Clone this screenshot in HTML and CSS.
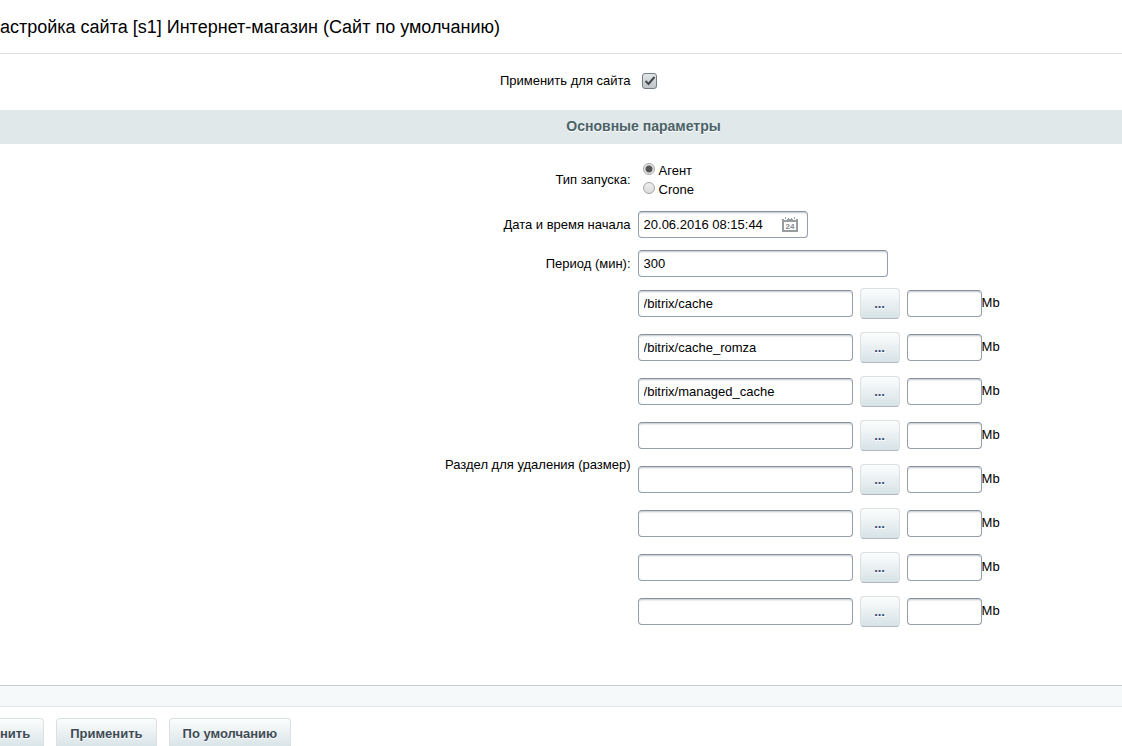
FILE: index.html
```
<!DOCTYPE html>
<html lang="ru">
<head>
<meta charset="utf-8">
<title>Настройка сайта</title>
<link rel="stylesheet" href="styles.css">
</head>
<body>
<form class="settings">
  <h1 class="title">астройка сайта [s1] Интернет-магазин (Сайт по умолчанию)</h1>
  <div class="row row-apply">
    <label class="label" for="apply">Применить для сайта</label>
    <div class="field"><input class="check" type="checkbox" id="apply" checked></div>
  </div>
  <h2 class="section">Основные параметры</h2>
  <div class="params">
    <div class="row" role="radiogroup" aria-labelledby="run-type">
      <span class="label" id="run-type">Тип запуска:</span>
      <div class="field radios">
        <label class="option"><input class="radio" type="radio" name="type" checked><span>Агент</span></label>
        <label class="option"><input class="radio" type="radio" name="type"><span>Crone</span></label>
      </div>
    </div>
    <div class="row row-date">
      <label class="label" for="start">Дата и время начала</label>
      <div class="field">
        <div class="date-box">
          <input class="date-input" type="text" id="start" value="20.06.2016 08:15:44">
          <button class="calendar" type="button" aria-label="Календарь">
            <svg width="16" height="15" viewBox="0 0 16 15" aria-hidden="true">
              <path fill="#9a9da0" fill-rule="evenodd" d="M0 2h2v1h3V2h6v1h3V2h2v13H0zM2 5v8h12V5z"/>
              <path fill="#9a9da0" d="M3 0h1v2H3zM12 0h1v2h-1zM6 1h1v1H6zM9 1h1v1H9z"/>
              <text class="calendar-day" x="8" y="12" text-anchor="middle">24</text>
            </svg>
          </button>
        </div>
      </div>
    </div>
    <div class="row row-period">
      <label class="label" for="period">Период (мин):</label>
      <div class="field"><input class="text period" type="text" id="period" value="300"></div>
    </div>
    <div class="row row-folders" role="group" aria-labelledby="folders">
      <span class="label" id="folders">Раздел для удаления (размер)</span>
      <div class="field folders">
        <div class="folder"><input class="text path" type="text" aria-label="Раздел 1" value="/bitrix/cache"><button class="button browse" type="button">...</button><label class="limit"><input class="text size" type="text"><span class="unit">Mb</span></label></div>
        <div class="folder"><input class="text path" type="text" aria-label="Раздел 2" value="/bitrix/cache_romza"><button class="button browse" type="button">...</button><label class="limit"><input class="text size" type="text"><span class="unit">Mb</span></label></div>
        <div class="folder"><input class="text path" type="text" aria-label="Раздел 3" value="/bitrix/managed_cache"><button class="button browse" type="button">...</button><label class="limit"><input class="text size" type="text"><span class="unit">Mb</span></label></div>
        <div class="folder"><input class="text path" type="text" aria-label="Раздел 4"><button class="button browse" type="button">...</button><label class="limit"><input class="text size" type="text"><span class="unit">Mb</span></label></div>
        <div class="folder"><input class="text path" type="text" aria-label="Раздел 5"><button class="button browse" type="button">...</button><label class="limit"><input class="text size" type="text"><span class="unit">Mb</span></label></div>
        <div class="folder"><input class="text path" type="text" aria-label="Раздел 6"><button class="button browse" type="button">...</button><label class="limit"><input class="text size" type="text"><span class="unit">Mb</span></label></div>
        <div class="folder"><input class="text path" type="text" aria-label="Раздел 7"><button class="button browse" type="button">...</button><label class="limit"><input class="text size" type="text"><span class="unit">Mb</span></label></div>
        <div class="folder"><input class="text path" type="text" aria-label="Раздел 8"><button class="button browse" type="button">...</button><label class="limit"><input class="text size" type="text"><span class="unit">Mb</span></label></div>
      </div>
    </div>
  </div>
  <div class="strip"></div>
  <div class="actions">
    <button class="button button-edge" type="button">нить</button>
    <button class="button" type="button">Применить</button>
    <button class="button" type="button">По умолчанию</button>
  </div>
</form>
</body>
</html>
```
FILE: styles.css
```
* { box-sizing: border-box; }
html { height: 100%; overflow: hidden; }
body {
  margin: 0;
  height: 100%;
  overflow: hidden;
  background: #fff;
  color: #000;
  font-family: "Liberation Sans", Arial, sans-serif;
  font-size: 13px;
  line-height: 16px;
}
input, button { font: inherit; color: inherit; margin: 0; }

.title {
  margin: 0;
  padding: 16px 0 15px;
  border-bottom: 1px solid #d9dede;
  font-size: 18px;
  line-height: 22px;
  font-weight: normal;
  white-space: nowrap;
}
.row {
  display: grid;
  grid-template-columns: 56.2% 1fr;
  column-gap: 7px;
  align-items: center;
}
.label { text-align: right; }
.field { display: flex; }
.row-apply { padding: 19px 0 21px; }

.check {
  appearance: none;
  width: 15px;
  height: 16px;
  margin-left: 4px;
  border: 1px solid #757d82;
  border-radius: 3px;
  background:
    url("data:image/svg+xml,%3Csvg xmlns='http://www.w3.org/2000/svg' viewBox='0 0 14 14'%3E%3Cpath fill='none' stroke='%23434a4e' stroke-width='2' d='M3 7l3 3 6-7'/%3E%3C/svg%3E") center / 14px 14px,
    linear-gradient(#e2e5e6, #bfc5c8);
}
.section {
  margin: 0;
  padding: 8px 0 10px 165px;
  background: #e0e8ea;
  color: #4b6267;
  font-size: 14px;
  line-height: 16px;
  text-align: center;
  text-shadow: 0 1px #fff;
}
.params { padding: 18px 0 44px; }
.radios { flex-direction: column; gap: 3px; }
.option { display: flex; align-items: flex-start; gap: 4px; margin-left: 5px; }
.option span { padding-top: 2px; line-height: 14px; }
.radio {
  appearance: none;
  width: 12px;
  height: 12px;
  margin-top: 1px;
  border: 1px solid #a5a5a5;
  border-radius: 50%;
  background: linear-gradient(#eee, #dcdcdc);
}
.radio:checked { background: radial-gradient(circle, #555 0 3px, #e6e6e6 4px); }

.text, .date-box {
  height: 27px;
  border: 1px solid #959fac;
  border-top-color: #87919c;
  border-radius: 4px;
  background: #fff;
  box-shadow: inset 0 2px 2px -1px #c0c6cc;
}
.text { padding: 0 5px; }
.row-date { padding-top: 14px; }
.date-box { display: flex; align-items: center; width: 170px; padding-right: 9px; }
.date-input { flex: 1; min-width: 0; padding: 0 5px; border: 0; background: none; }
.calendar { display: flex; padding: 0; border: 0; background: none; }
.calendar-day { fill: #85898c; font-size: 8px; font-weight: bold; }
.row-period { padding-top: 12px; }
.period { width: 250px; }
.row-folders { padding-top: 11px; }
.folders { flex-direction: column; gap: 13px; padding-bottom: 14px; }
.folder { display: flex; align-items: center; gap: 7px; height: 31px; }
.path { width: 215px; }
.limit { display: flex; align-items: center; }
.size { width: 75px; }
.unit { padding-bottom: 2px; }

.button {
  height: 31px;
  padding: 0 13px;
  border: 1px solid #dbe0e2;
  border-bottom-color: #afb9bd;
  border-radius: 4px;
  background: linear-gradient(#fcfdfd, #d7e3e7);
  color: #3f4b54;
  font-weight: bold;
  text-shadow: 0 1px #fff;
  white-space: nowrap;
}
.browse { width: 40px; color: #3f4b74; }
.strip {
  height: 22px;
  border-top: 1px solid #c3ced1;
  border-bottom: 1px solid #dce7ed;
  background: #f5f9f9;
}
.actions { display: flex; gap: 12px; padding-top: 11px; }
.button-edge { padding-left: 0; border-left: 0; border-radius: 0 4px 4px 0; }
```
